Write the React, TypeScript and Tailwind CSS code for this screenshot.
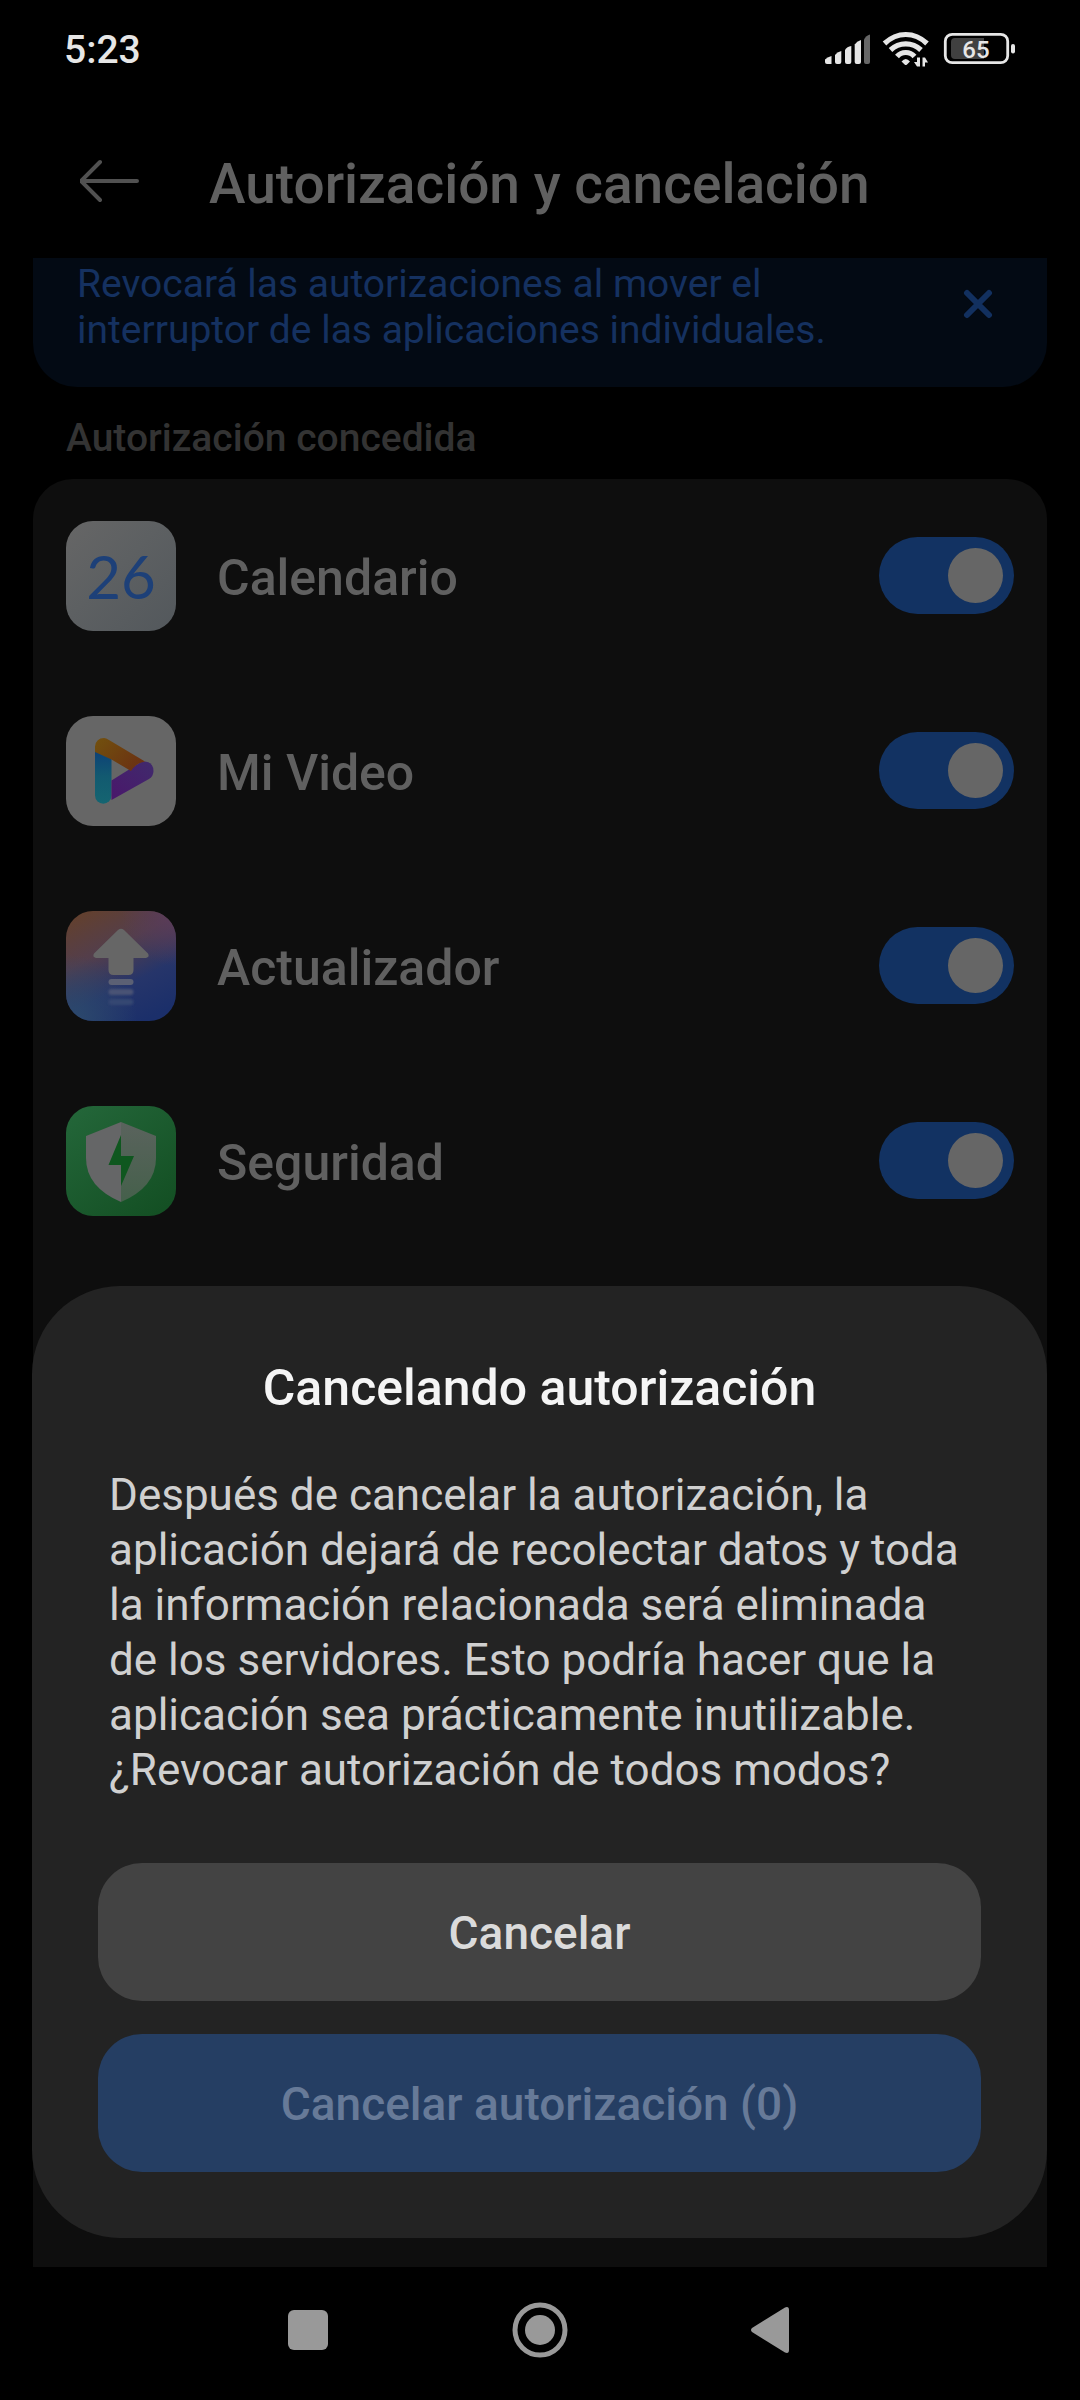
import { useState, type ReactNode } from "react";

type AppEntry = {
  id: string;
  name: string;
  icon: ReactNode;
};

function CalendarIcon() {
  return (
    <svg viewBox="0 0 110 110" className="size-full" aria-hidden="true">
      <defs>
        <linearGradient id="cal-bg" x1="0" y1="0" x2="1" y2="1">
          <stop offset="0" stopColor="#666666" />
          <stop offset="0.45" stopColor="#5d6062" />
          <stop offset="1" stopColor="#53585c" />
        </linearGradient>
      </defs>
      <rect width="110" height="110" rx="27" fill="url(#cal-bg)" />
      <text x="55" y="78" textAnchor="middle" fontFamily="Lato, sans-serif" fontSize="60" fill="#1d4078">
        26
      </text>
    </svg>
  );
}

function VideoIcon() {
  return (
    <svg viewBox="0 0 110 110" className="size-full" aria-hidden="true">
      <defs>
        <linearGradient id="vid-blue" x1="0" y1="0" x2="0" y2="1">
          <stop offset="0" stopColor="#0d4077" />
          <stop offset="0.5" stopColor="#125a70" />
          <stop offset="1" stopColor="#156571" />
        </linearGradient>
        <linearGradient id="vid-orange" x1="0" y1="0" x2="1" y2="0.6">
          <stop offset="0" stopColor="#72510e" />
          <stop offset="1" stopColor="#6b3212" />
        </linearGradient>
        <linearGradient id="vid-purple" x1="0" y1="1" x2="1" y2="0">
          <stop offset="0" stopColor="#4a176b" />
          <stop offset="1" stopColor="#402a6c" />
        </linearGradient>
      </defs>
      <rect width="110" height="110" rx="27" fill="#666666" />
      <path d="M29 34 L45.500 42 L45.500 79.500 A8.250 8.250 0 0 1 29 79.500 Z" fill="url(#vid-blue)" />
      <path d="M45.500 64.500 L75 46 L79 45.500 Q87.500 46.500 87.500 55 Q87.500 60 83 63 L45.500 84 Z" fill="url(#vid-purple)" />
      <path d="M29 36 L29 30.500 Q30 22 38 22 Q40 22 43 24 L79 45.500 Q70 47 65 55 L45.500 43.500 Z" fill="url(#vid-orange)" />
    </svg>
  );
}

function UpdaterIcon() {
  return (
    <svg viewBox="0 0 110 110" className="size-full" aria-hidden="true">
      <defs>
        <linearGradient id="upd-bg" x1="0.2" y1="0" x2="0.7" y2="1">
          <stop offset="0" stopColor="#62402f" />
          <stop offset="0.35" stopColor="#533e4c" />
          <stop offset="0.68" stopColor="#26356a" />
          <stop offset="1" stopColor="#1b2f6a" />
        </linearGradient>
        <radialGradient id="upd-pink" cx="1" cy="0" r="0.5">
          <stop offset="0" stopColor="#5a3b5a" />
          <stop offset="1" stopColor="#5a3b5a" stopOpacity="0" />
        </radialGradient>
        <radialGradient id="upd-teal" cx="0.05" cy="1" r="0.6">
          <stop offset="0" stopColor="#2c4a6d" />
          <stop offset="1" stopColor="#2c4a6d" stopOpacity="0" />
        </radialGradient>
        <filter id="upd-soft" x="-20%" y="-60%" width="140%" height="220%">
          <feGaussianBlur stdDeviation="1" />
        </filter>
      </defs>
      <rect width="110" height="110" rx="27" fill="url(#upd-bg)" />
      <rect width="110" height="110" rx="27" fill="url(#upd-pink)" />
      <rect width="110" height="110" rx="27" fill="url(#upd-teal)" />
      <path
        d="M52 19 Q55 16.500 58 19 L82 42.500 Q84 46 80 47 L67.500 47 L67.500 59 Q67.500 64 62.500 64 L47.500 64 Q42.500 64 42.500 59 L42.500 47 L30 47 Q26 46 28 42.500 Z"
        fill="#666666"
      />
      <rect x="42.500" y="68" width="25" height="6" rx="3" fill="#5b6074" />
      <rect x="42.500" y="78" width="25" height="6" rx="3" fill="#4a5375" filter="url(#upd-soft)" />
      <rect x="42.500" y="88" width="25" height="6" rx="3" fill="#364672" filter="url(#upd-soft)" />
    </svg>
  );
}

function SecurityIcon() {
  return (
    <svg viewBox="0 0 110 110" className="size-full" aria-hidden="true">
      <defs>
        <linearGradient id="sec-bg" x1="0" y1="0" x2="0.8" y2="1">
          <stop offset="0" stopColor="#24673a" />
          <stop offset="1" stopColor="#145024" />
        </linearGradient>
        <linearGradient id="sec-right" x1="0" y1="0" x2="0" y2="1">
          <stop offset="0" stopColor="#5a635d" />
          <stop offset="1" stopColor="#45604b" />
        </linearGradient>
      </defs>
      <rect width="110" height="110" rx="27" fill="url(#sec-bg)" />
      <path d="M55 16 L20 30 L20 52 Q20 81 55 96 Z" fill="#656667" />
      <path d="M55 16 L90 30 L90 52 Q90 81 55 96 Z" fill="url(#sec-right)" />
      <path d="M55 29 L42.500 59 L55 59 L55 80 L68 50 L55 50 Z" fill="#0f571f" />
    </svg>
  );
}

const APPS: AppEntry[] = [
  { id: "calendar", name: "Calendario", icon: <CalendarIcon /> },
  { id: "video", name: "Mi Video", icon: <VideoIcon /> },
  { id: "updater", name: "Actualizador", icon: <UpdaterIcon /> },
  { id: "security", name: "Seguridad", icon: <SecurityIcon /> },
];

function StatusBar() {
  return (
    <div className="flex h-[98px] items-center justify-between px-16 text-[#e6e6e6]">
      <span className="pt-0.5 text-[39px] font-medium leading-none">5:23</span>
      <svg viewBox="820 26 196 44" className="h-11 w-[196px]" fill="currentColor" aria-hidden="true">
        <path d="M825 58.500 Q827 56 831.500 55 V63 H827 Q825 63 825 61 Z" />
        <path d="M835 54 Q837 51 841.300 50 V61 Q841.300 63 839.300 63 H837 Q835 63 835 61 Z" />
        <path d="M845 49 Q847 45.500 851.300 45 V61 Q851.300 63 849.300 63 H847 Q845 63 845 61 Z" />
        <path d="M854.700 43.500 Q856.700 40 861 39 V61 Q861 63 859 63 H856.700 Q854.700 63 854.700 61 Z" />
        <path d="M864 38.500 Q866 34.500 870 33.500 V61 Q870 63 868 63 H866 Q864 63 864 61 Z" fill="#666666" />
        <g fill="none" stroke="currentColor" strokeWidth="5.200">
          <path d="M884.500 42.500 Q894 33.500 905.800 33.500 Q917.500 33.500 927 42.500" />
          <path d="M890.500 49 Q897 42.800 905.800 42.800 Q914.500 42.800 921 49" />
          <path d="M897 55.500 Q900.500 51.500 905.800 51.500 Q911 51.500 914.500 55.500" />
        </g>
        <path d="M901.500 60.500 Q905.800 55.500 910 60.500 L907 63.500 Q905.800 64.700 904.600 63.500 Z" />
        <path d="M917 56.500 H920 V65.500 H917 L914 61 H917 Z M922.500 56.500 H925 L928 61.500 H925 V65.500 H922.500 Z" />
        <rect x="945.300" y="33.300" width="62.400" height="28.400" rx="7" fill="none" stroke="currentColor" strokeWidth="2.800" />
        <path d="M955 37 H984 V58 H955 Q951 58 951 54 V41 Q951 37 955 37 Z" fill="#404040" />
        <rect x="1011" y="43" width="4" height="9.500" rx="2" />
        <text x="976" y="56.500" textAnchor="middle" fontSize="24" fontWeight="500" fontFamily="Roboto, sans-serif">
          65
        </text>
      </svg>
    </div>
  );
}

function Header() {
  return (
    <header className="flex h-40 items-center gap-[67px] px-20 pt-1.5">
      <button type="button" aria-label="Atrás" className="text-[#515151]">
        <svg viewBox="2 0 62 46" className="h-[46px] w-[62px]" fill="none" stroke="currentColor" strokeWidth="4" strokeLinecap="round" aria-hidden="true">
          <path d="M22 4 L3 23 L22 42 M3 23 H59" />
        </svg>
      </button>
      <h1 className="pt-1.5 text-[55px] font-medium leading-none text-[#606060]">Autorización y cancelación</h1>
    </header>
  );
}

function Switch({ checked, label, onChange }: { checked: boolean; label: string; onChange: () => void }) {
  return (
    <button
      type="button"
      role="switch"
      aria-checked={checked}
      aria-label={label}
      onClick={onChange}
      className={`flex h-[77px] w-[135px] shrink-0 items-center rounded-full px-[11px] ${
        checked ? "justify-end bg-[#123262]" : "justify-start bg-[#262626]"
      }`}
    >
      <span className="size-[55px] rounded-full bg-[#666666]" />
    </button>
  );
}

function NavBar() {
  return (
    <nav className="flex h-[133px] items-center justify-center gap-[174px] pb-2 text-[#999999]">
      <button type="button" aria-label="Recientes">
        <svg viewBox="0 0 58 58" className="size-[58px]" fill="currentColor" aria-hidden="true">
          <rect x="9" y="9" width="40" height="40" rx="6" />
        </svg>
      </button>
      <button type="button" aria-label="Inicio">
        <svg viewBox="0 0 58 58" className="size-[58px]" fill="currentColor" aria-hidden="true">
          <circle cx="29" cy="29" r="25" fill="none" stroke="currentColor" strokeWidth="5" />
          <circle cx="29" cy="29" r="15" />
        </svg>
      </button>
      <button type="button" aria-label="Volver">
        <svg viewBox="0 0 58 58" className="size-[58px]" fill="currentColor" aria-hidden="true">
          <path d="M9 27 L42 6.500 Q46 5 46 9 V49 Q46 53 42 51.500 L9 31 Q7 29 9 27 Z" />
        </svg>
      </button>
    </nav>
  );
}

export default function App() {
  const [granted, setGranted] = useState<Record<string, boolean>>({
    calendar: true,
    video: true,
    updater: true,
    security: true,
  });

  const toggle = (id: string) => setGranted((prev) => ({ ...prev, [id]: !prev[id] }));

  return (
    <div className="flex min-h-screen flex-col bg-black font-[Roboto,sans-serif]">
      <div className="relative flex flex-1 flex-col">
        <StatusBar />
        <Header />

        <main className="flex flex-1 flex-col px-[33px]">
          <section className="flex items-start justify-between rounded-b-[44px] bg-[#030a14] pt-[3px] pr-[54px] pb-[34px] pl-11">
            <p className="text-[39px] leading-[46px] text-[#153160]">
              Revocará las autorizaciones al mover el
              <br />
              interruptor de las aplicaciones individuales.
            </p>
            <button type="button" aria-label="Cerrar aviso" className="mt-7 text-[#12305f]">
              <svg viewBox="0 0 30 30" className="size-[30px]" fill="none" stroke="currentColor" strokeWidth="6" strokeLinecap="round" aria-hidden="true">
                <path d="M4 4 L26 26 M26 4 L4 26" />
              </svg>
            </button>
          </section>

          <h2 className="px-[33px] pt-7 pb-[18px] text-[39px] font-medium leading-[46px] text-[#333333]">
            Autorización concedida
          </h2>

          <ul className="flex-1 rounded-t-[40px] bg-[#0e0e0e]">
            {APPS.map((app) => (
              <li key={app.id} className="flex h-[195px] items-center gap-[41px] px-[33px] pb-0.5">
                <span className="size-[110px] shrink-0">{app.icon}</span>
                <span className="flex-1 pt-1 text-[50px] font-medium leading-none text-[#606060]">{app.name}</span>
                <Switch checked={granted[app.id]} label={app.name} onChange={() => toggle(app.id)} />
              </li>
            ))}
          </ul>
        </main>

        {/* bottom sheet over the list */}
        <div
          role="dialog"
          aria-labelledby="sheet-title"
          className="absolute right-[33px] bottom-[29px] left-8 rounded-[88px] bg-[#232323] px-[66px] pt-[72px] pb-[66px]"
        >
          <h2 id="sheet-title" className="text-center text-[50px] font-medium leading-[60px] text-[#f5f5f5]">
            Cancelando autorización
          </h2>
          <p className="mt-[50px] px-[11px] text-[44px] leading-[55px] text-[#d0d0d0]">
            Después de cancelar la autorización, la aplicación dejará de recolectar datos y toda la información
            relacionada será eliminada de los servidores. Esto podría hacer que la aplicación sea prácticamente
            inutilizable. ¿Revocar autorización de todos modos?
          </p>
          <div className="mt-[65px] flex flex-col gap-[33px]">
            <button type="button" className="h-[138px] rounded-[44px] bg-[#434343] pt-0.5 text-[46px] font-medium text-[#dbdbdb]">
              Cancelar
            </button>
            <button type="button" disabled className="h-[138px] rounded-[44px] bg-[#253e63] pt-0.5 text-[46px] font-medium text-[#677a98]">
              Cancelar autorización (0)
            </button>
          </div>
        </div>
      </div>

      <NavBar />
    </div>
  );
}
